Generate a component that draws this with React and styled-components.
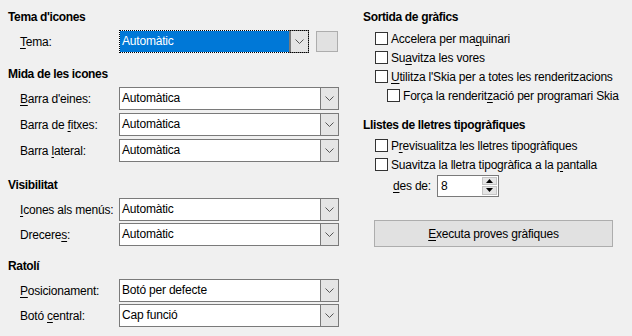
import styled, { createGlobalStyle } from "styled-components";

const GlobalStyle = createGlobalStyle`
  body {
    margin: 0;
    background: #f0f0f0;
    font-family: "Liberation Sans", Arial, sans-serif;
    font-size: 12px;
    letter-spacing: -0.2px;
    color: #000;
  }
`;

const Page = styled.div`
  display: flex;
  align-items: flex-start;
  width: 632px;
  height: 336px;
  box-sizing: border-box;
  padding: 9px 0 0 8px;
  background: #f0f0f0;
`;

const LeftColumn = styled.div`
  display: flex;
  flex-direction: column;
  width: 331px;
`;

const RightColumn = styled.div`
  display: flex;
  flex-direction: column;
  margin-left: 24px;
  width: 250px;
`;

const Section = styled.div`
  display: flex;
  flex-direction: column;
  flex: none;
  margin-top: ${(p) => p.$mt ?? 0}px;
`;

const Heading = styled.div`
  font-weight: bold;
  letter-spacing: -0.35px;
  height: 16px;
  line-height: 16px;
  margin-bottom: ${(p) => p.$mb ?? 5}px;
`;

const FieldRows = styled.div`
  display: flex;
  flex-direction: column;
  gap: ${(p) => p.$gap ?? 2}px;
  padding-left: 12px;
`;

const FieldRow = styled.div`
  display: flex;
  align-items: center;
  height: 23px;
  flex: none;
`;

const Label = styled.span`
  width: 99px;
  white-space: nowrap;
`;

const Mn = styled.span`
  text-decoration: underline;
  text-underline-offset: 2px;
`;

const Combo = styled.div`
  display: flex;
  width: ${(p) => p.$width || 220}px;
  height: 23px;
  box-sizing: border-box;
  border: 1px solid ${(p) => (p.$focused ? "transparent" : "#7a7a7a")};
  outline: ${(p) => (p.$focused ? "1px dotted #000" : "none")};
  outline-offset: -1px;
  background: #fff;
`;

const ComboText = styled.div`
  flex: 1;
  padding-left: 2px;
  line-height: 21px;
  background: ${(p) => (p.$selected ? "#0078d7" : "#fff")};
  color: ${(p) => (p.$selected ? "#fff" : "#000")};
`;

const ComboButton = styled.div`
  display: flex;
  align-items: center;
  justify-content: center;
  width: 17px;
  background: #e5e5e5;
  border-left: 1px solid #7a7a7a;
  box-shadow: ${(p) => (p.$focused ? "0 0 0 1px #7a7a7a" : "none")};
`;

const SquareButton = styled.div`
  width: 22px;
  height: 21px;
  box-sizing: border-box;
  margin-left: 7px;
  border: 1px solid #adadad;
  background: #e1e1e1;
`;

const CheckRow = styled.div`
  display: flex;
  align-items: center;
  height: 19px;
  padding-left: ${(p) => (p.$indent ? 24 : 12)}px;
  white-space: nowrap;
`;

const CheckBox = styled.span`
  width: 13px;
  height: 13px;
  box-sizing: border-box;
  border: 1px solid #333;
  background: #fff;
  margin-right: 3px;
  flex: none;
`;

const SpinRow = styled.div`
  display: flex;
  align-items: center;
  height: 23px;
  padding-left: 30px;
`;

const SpinLabel = styled.span`
  width: 44px;
`;

const SpinBox = styled.div`
  display: flex;
  width: 62px;
  height: 22px;
  box-sizing: border-box;
  border: 1px solid #7a7a7a;
  background: #fff;
`;

const SpinValue = styled.div`
  flex: 1;
  padding-left: 3px;
  line-height: 20px;
`;

const SpinButtons = styled.div`
  display: flex;
  flex-direction: column;
  gap: 1px;
  width: 15px;
  margin: 1px 1px 1px 0;
`;

const SpinButton = styled.div`
  flex: 1;
  display: flex;
  align-items: center;
  justify-content: center;
  background: #e5e5e5;
  border: 1px solid #c4c4c4;
`;

const PushButton = styled.div`
  margin: 23px 0 0 11px;
  width: 239px;
  height: 27px;
  box-sizing: border-box;
  border: 1px solid #adadad;
  background: #e1e1e1;
  display: flex;
  align-items: center;
  justify-content: center;
`;

const Chevron = () => (
  <svg width="9" height="5" viewBox="0 0 9 5">
    <path d="M0.5 0.5 L4.5 4.5 L8.5 0.5" fill="none" stroke="#555" strokeWidth="1" />
  </svg>
);

const Arrow = ({ up }) => (
  <svg width="7" height="4" viewBox="0 0 7 4">
    <path d={up ? "M0 4 L3.5 0 L7 4 Z" : "M0 0 L3.5 4 L7 0 Z"} fill="#000" />
  </svg>
);

const ComboField = ({ label, value }) => (
  <FieldRow>
    <Label>{label}</Label>
    <Combo>
      <ComboText>{value}</ComboText>
      <ComboButton>
        <Chevron />
      </ComboButton>
    </Combo>
  </FieldRow>
);

const Check = ({ children, indent }) => (
  <CheckRow $indent={indent}>
    <CheckBox />
    <span>{children}</span>
  </CheckRow>
);

export default function App() {
  return (
    <>
      <GlobalStyle />
      <Page>
        <LeftColumn>
          <Section>
            <Heading>Tema d'icones</Heading>
            <FieldRows>
              <FieldRow>
                <Label>
                  <Mn>T</Mn>ema:
                </Label>
                <Combo $width={190} $focused>
                  <ComboText $selected>Automàtic</ComboText>
                  <ComboButton $focused>
                    <Chevron />
                  </ComboButton>
                </Combo>
                <SquareButton />
              </FieldRow>
            </FieldRows>
          </Section>

          <Section $mt={13}>
            <Heading>Mida de les icones</Heading>
            <FieldRows $gap={3}>
              <ComboField label={<><Mn>B</Mn>arra d'eines:</>} value="Automàtica" />
              <ComboField label={<>Barra de <Mn>f</Mn>itxes:</>} value="Automàtica" />
              <ComboField label={<>Barra <Mn>l</Mn>ateral:</>} value="Automàtica" />
            </FieldRows>
          </Section>

          <Section $mt={15}>
            <Heading>Visibilitat</Heading>
            <FieldRows>
              <ComboField label={<><Mn>I</Mn>cones als menús:</>} value="Automàtic" />
              <ComboField label={<>Drecere<Mn>s</Mn>:</>} value="Automàtic" />
            </FieldRows>
          </Section>

          <Section $mt={12}>
            <Heading>Ratolí</Heading>
            <FieldRows>
              <ComboField label={<><Mn>P</Mn>osicionament:</>} value="Botó per defecte" />
              <ComboField label={<>Botó <Mn>c</Mn>entral:</>} value="Cap funció" />
            </FieldRows>
          </Section>
        </LeftColumn>

        <RightColumn>
          <Section>
            <Heading $mb={4}>Sortida de gràfics</Heading>
            <Check>
              Accelera per ma<Mn>q</Mn>uinari
            </Check>
            <Check>
              Su<Mn>a</Mn>vitza les vores
            </Check>
            <Check>
              <Mn>U</Mn>tilitza l'Skia per a totes les renderitzacions
            </Check>
            <Check indent>
              Força la renderit<Mn>z</Mn>ació per programari Skia
            </Check>
          </Section>

          <Section $mt={12}>
            <Heading $mb={3}>Llistes de lletres tipogràfiques</Heading>
            <Check>
              P<Mn>r</Mn>evisualitza les lletres tipogràfiques
            </Check>
            <Check>
              Suavitza la lletra tipogràfica a la <Mn>p</Mn>antalla
            </Check>
            <SpinRow>
              <SpinLabel>
                <Mn>d</Mn>es de:
              </SpinLabel>
              <SpinBox>
                <SpinValue>8</SpinValue>
                <SpinButtons>
                  <SpinButton>
                    <Arrow up />
                  </SpinButton>
                  <SpinButton>
                    <Arrow />
                  </SpinButton>
                </SpinButtons>
              </SpinBox>
            </SpinRow>
            <PushButton>
              <span>
                <Mn>E</Mn>xecuta proves gràfiques
              </span>
            </PushButton>
          </Section>
        </RightColumn>
      </Page>
    </>
  );
}
